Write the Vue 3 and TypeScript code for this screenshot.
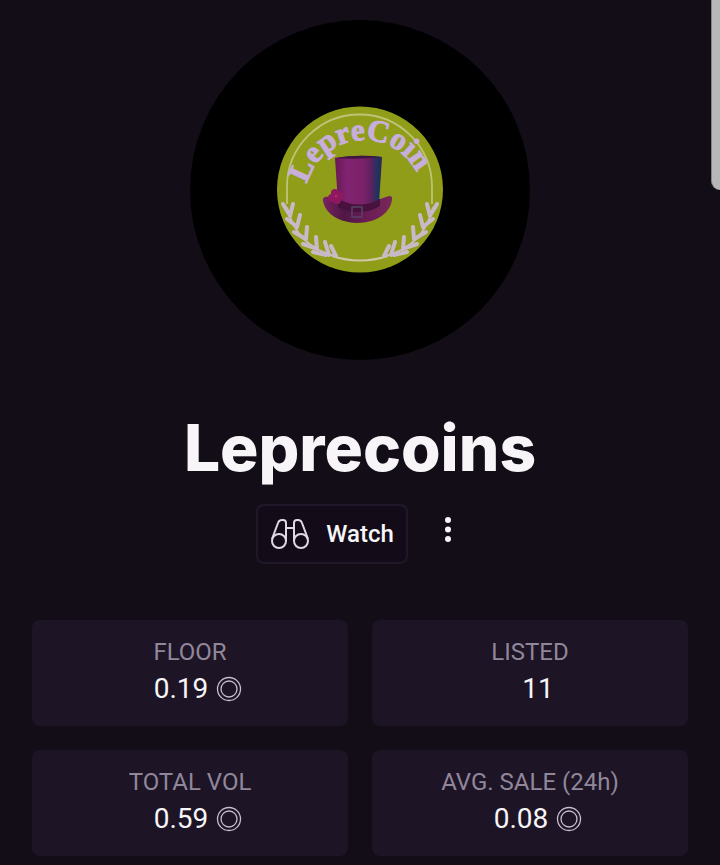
<script setup lang="ts">
interface Stat {
  label: string
  value: string
  currency: boolean
}

interface Leaf {
  x: number
  y: number
  tipX: number
  tipY: number
}

const stats: Stat[] = [
  { label: 'FLOOR', value: '0.19', currency: true },
  { label: 'LISTED', value: '11', currency: false },
  { label: 'TOTAL VOL', value: '0.59', currency: true },
  { label: 'AVG. SALE (24h)', value: '0.08', currency: true },
]

// Leaves of one laurel branch; the other branch is its mirror image.
const leaves: Leaf[] = [
  { x: -71, y: 24, tipX: -77, tipY: 14 },
  { x: -70, y: 26, tipX: -67, tipY: 14 },
  { x: -64, y: 36, tipX: -73, tipY: 29 },
  { x: -63, y: 37, tipX: -60, tipY: 25 },
  { x: -56, y: 48, tipX: -66, tipY: 42 },
  { x: -54, y: 49, tipX: -53, tipY: 37 },
  { x: -45, y: 58, tipX: -57, tipY: 54 },
  { x: -43, y: 59, tipX: -44, tipY: 47 },
  { x: -34, y: 65, tipX: -47, tipY: 62 },
  { x: -31, y: 65, tipX: -35, tipY: 52 },
  { x: -24, y: 66, tipX: -29, tipY: 56 },
]
</script>

<template>
  <main class="page">
    <div class="side-panel" aria-hidden="true"></div>

    <svg class="avatar" viewBox="-170 -170 340 340" role="img" aria-labelledby="collection-name">
      <defs>
        <linearGradient id="crown" x1="0" x2="1" y1="0" y2="0">
          <stop offset="0" stop-color="#681953" />
          <stop offset="0.25" stop-color="#812371" />
          <stop offset="0.6" stop-color="#7c2268" />
          <stop offset="0.8" stop-color="#57215f" />
          <stop offset="0.88" stop-color="#20355f" />
          <stop offset="1" stop-color="#302458" />
        </linearGradient>
        <linearGradient id="brim" x1="0" x2="1" y1="0" y2="0">
          <stop offset="0" stop-color="#792363" />
          <stop offset="0.3" stop-color="#4f1744" />
          <stop offset="0.65" stop-color="#6b1d56" />
          <stop offset="1" stop-color="#782858" />
        </linearGradient>
        <path id="arch" d="M-53 -6A59 59 0 0 1 62 -2" />
      </defs>
      <circle r="170" fill="#000" />
      <circle r="83" cy="-0.5" fill="#8f9d19" />
      <path d="M-73 14V-3A72.500 72.500 0 0 1 72 -3V14" fill="none" stroke="#bec477" stroke-width="1.800" />
      <path d="M-28 66Q0 75 28 66" fill="none" stroke="#d0c8a9" stroke-width="2" />
      <text class="coin-text"><textPath href="#arch" startOffset="0">LepreCoin</textPath></text>

      <path d="M-37 11C-38 6 -33 6 -24 8L20 9C25 8 29 4 32 7C33 18 21 33 -3 33C-24 32 -35 22 -37 11Z" fill="url(#brim)" />
      <path d="M-25 -32Q-2 -36 22 -33L19 14Q-2 24 -22 13Z" fill="url(#crown)" />
      <path d="M-25 -32Q-2 -30 22 -33Q-2 -36 -25 -32Z" fill="#3d1740" />
      <path d="M-22 9Q0 20 20 9L20 16Q0 28 -22 17Z" fill="#48123e" />
      <path d="M-8 17H2V27H-8Z" fill="none" stroke="#594069" stroke-width="1.500" />
      <g fill="#8d185f">
        <circle cx="-25" cy="3" r="4" />
        <circle cx="-20" cy="6" r="4" />
        <circle cx="-28" cy="8" r="4" />
        <circle cx="-23" cy="10" r="4" />
      </g>
      <circle cx="-24" cy="6" r="1.500" fill="#a72a75" />

      <g v-for="side in [1, -1]" :key="side" :transform="`scale(${side} 1)`" class="laurel">
        <path d="M-73 18Q-62 58 -24 66" stroke-width="2" />
        <path
          v-for="(leaf, i) in leaves"
          :key="i"
          :d="`M${leaf.x} ${leaf.y}L${leaf.tipX} ${leaf.tipY}`"
          stroke-width="4"
        />
      </g>
    </svg>

    <h1 id="collection-name" class="title">Leprecoins</h1>

    <div class="actions">
      <button type="button" class="watch">
        <svg class="binoculars" viewBox="0 0 40 32" aria-hidden="true">
          <circle cx="9" cy="23" r="7" />
          <circle cx="31" cy="23" r="7" />
          <path d="M2 21L8 5Q9 2 12 2H13Q16 2 16 5V23M38 21L32 5Q31 2 28 2H27Q24 2 24 5V23M16 10H24" />
        </svg>
        <span>Watch</span>
      </button>
      <button type="button" class="more" aria-label="More options">
        <svg class="dots" viewBox="0 0 8 28" aria-hidden="true">
          <circle cx="4" cy="4" r="3" />
          <circle cx="4" cy="13.500" r="3" />
          <circle cx="4" cy="23" r="3" />
        </svg>
      </button>
    </div>

    <dl class="stats">
      <div v-for="stat in stats" :key="stat.label" class="card">
        <dt>{{ stat.label }}</dt>
        <dd>
          <span>{{ stat.value }}</span>
          <svg v-if="stat.currency" class="coin" viewBox="0 0 26 26" role="img" aria-label="SOL">
            <circle cx="13" cy="13" r="11.500" />
            <circle cx="13" cy="13" r="8" />
          </svg>
        </dd>
      </div>
    </dl>
  </main>
</template>

<style>
body {
  margin: 0;
  background: #130d18;
}
</style>

<style scoped>
.page {
  position: relative;
  box-sizing: border-box;
  min-height: 100vh;
  padding: 20px 32px 8px;
  display: flex;
  flex-direction: column;
  align-items: center;
  overflow: hidden;
  background: #130d18;
  color: #f7f5f7;
  font-family: Roboto, "Liberation Sans", sans-serif;
}

.side-panel {
  position: absolute;
  top: 0;
  right: 0;
  width: 8px;
  height: 190px;
  border-left: 1px solid #858187;
  border-bottom-left-radius: 9px;
  background: #b7b6b9;
}

.avatar {
  width: 340px;
  height: 340px;
}

.coin-text {
  font: bold 31px "Liberation Serif", serif;
  fill: #c7aedb;
  stroke: #c7aedb;
  stroke-width: 1;
}

.laurel {
  fill: none;
  stroke: #c9b9c6;
  stroke-linecap: round;
}

.title {
  margin: 48px 0 16px;
  font-family: Inter, "Liberation Sans", sans-serif;
  font-size: 64px;
  font-weight: 800;
  line-height: 80px;
}

.actions {
  display: flex;
  align-items: center;
  gap: 24px;
}

.watch {
  display: flex;
  align-items: center;
  gap: 16px;
  height: 60px;
  padding: 0 12px;
  border: 2px solid #21172b;
  border-radius: 8px;
  background: #130c18;
  color: inherit;
  font: 500 24px/32px Roboto, sans-serif;
}

.binoculars {
  width: 40px;
  height: 32px;
  fill: none;
  stroke: #dfd9e4;
  stroke-width: 2;
}

.more {
  display: flex;
  justify-content: center;
  width: 32px;
  padding: 0 0 8px;
  border: 0;
  background: none;
}

.dots {
  width: 8px;
  height: 28px;
  fill: #f7f5f7;
}

.stats {
  display: grid;
  grid-template-columns: 1fr 1fr;
  gap: 24px;
  align-self: stretch;
  margin: 56px 0 0;
}

.card {
  padding: 16px;
  border-radius: 8px;
  background: #1d1426;
  text-align: center;
}

dt {
  color: #91879a;
  font-size: 24px;
  line-height: 32px;
}

dd {
  display: flex;
  align-items: center;
  justify-content: center;
  gap: 8px;
  margin: 0;
  padding-left: 16px;
  font-size: 28px;
  line-height: 42px;
}

.coin {
  width: 26px;
  height: 26px;
  fill: none;
  stroke: #c6bfcc;
  stroke-width: 1.3;
}
</style>
